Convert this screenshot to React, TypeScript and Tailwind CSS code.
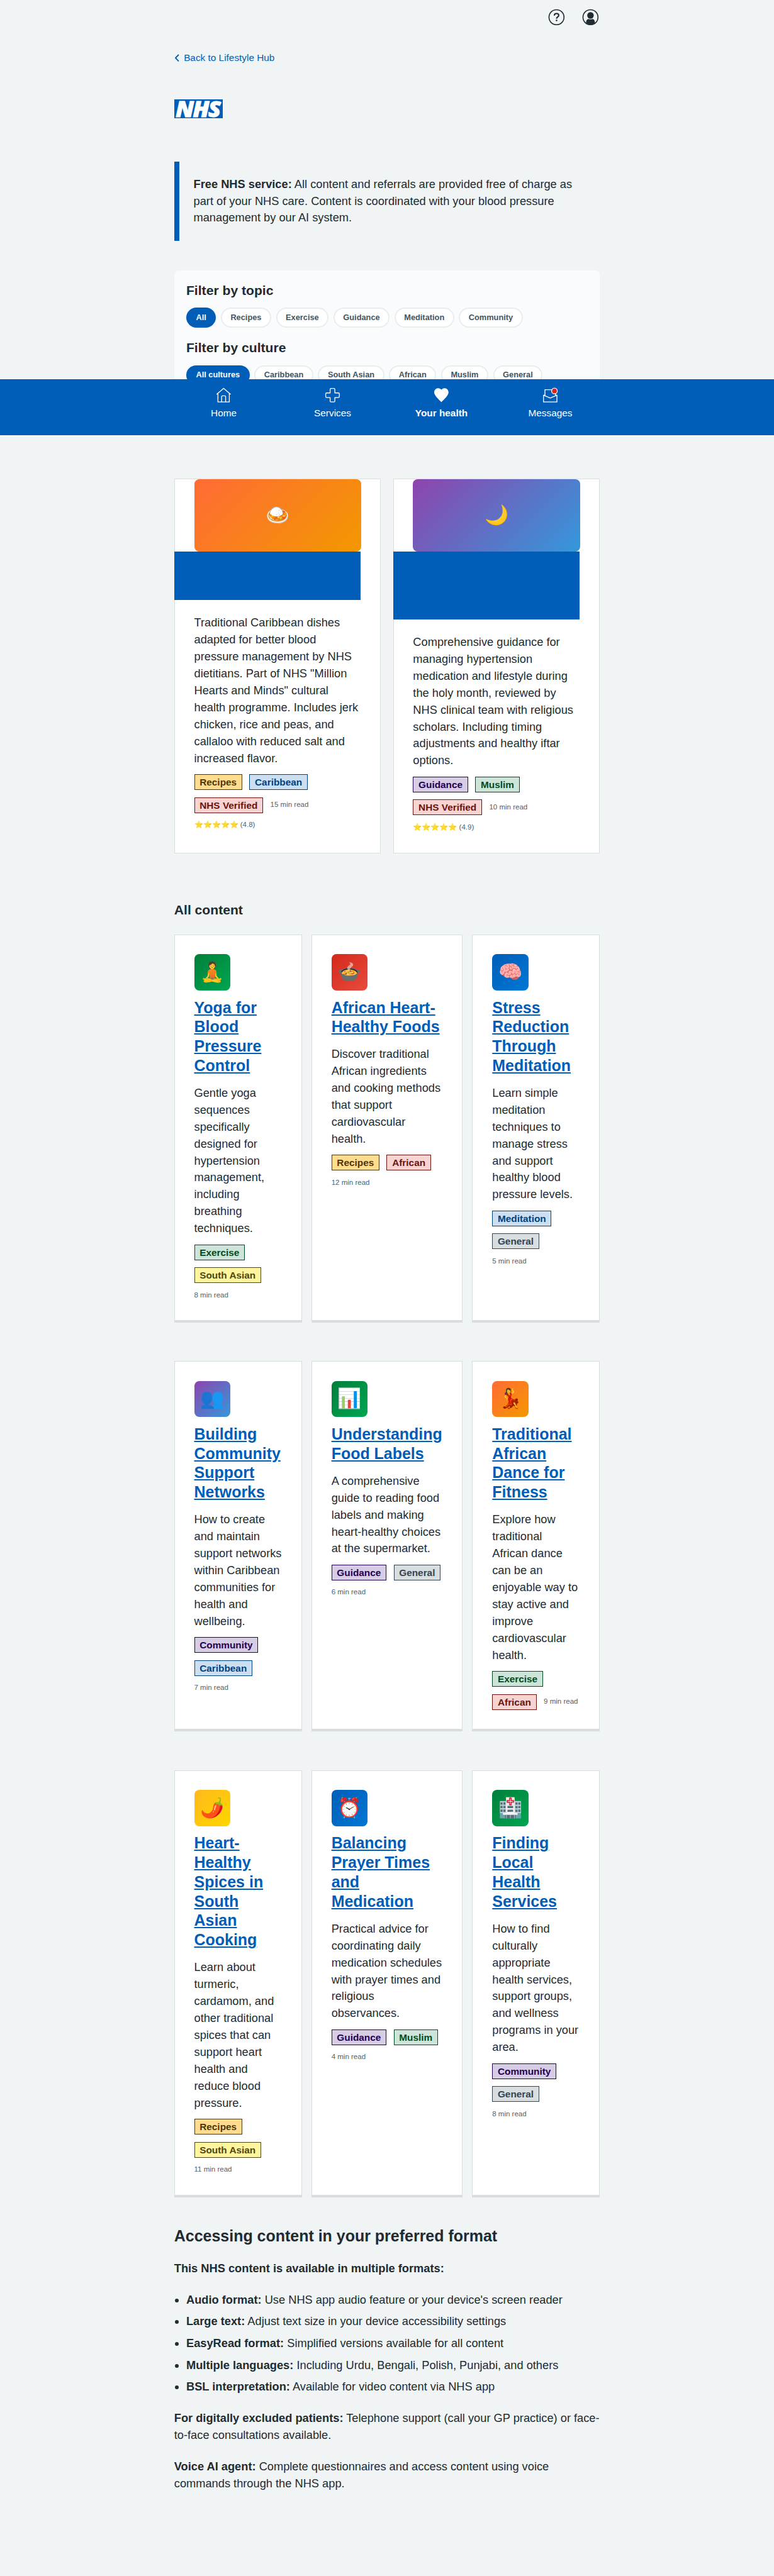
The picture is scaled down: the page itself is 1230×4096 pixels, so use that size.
import type { ReactNode } from "react";

const tones = {
  orange: "bg-[#ffdc8e] text-[#4d3705] border-[#4d3705]",
  blue: "bg-[#ccdff1] text-[#004281] border-[#004281]",
  red: "bg-[#f7d4d1] text-[#6a140e] border-[#6a140e]",
  purple: "bg-[#d6cce3] text-[#240052] border-[#240052]",
  green: "bg-[#cce5d8] text-[#004b23] border-[#004b23]",
  grey: "bg-[#d8dde0] text-[#354450] border-[#354450]",
  yellow: "bg-[#fff59d] text-[#4d4712] border-[#4d4712]",
};

type Tone = keyof typeof tones;
type TagData = [string, Tone];

const gradients = {
  green: "bg-[linear-gradient(135deg,#007f3b,#00a651)]",
  red: "bg-[linear-gradient(135deg,#d5281b,#e74c3c)]",
  blue: "bg-[linear-gradient(135deg,#005eb8,#0078d4)]",
  purple: "bg-[linear-gradient(135deg,#8e44ad,#3498db)]",
  orange: "bg-[linear-gradient(135deg,#ff6b35,#f39800)]",
  yellow: "bg-[linear-gradient(135deg,#ffb81c,#ffd700)]",
};

type Gradient = keyof typeof gradients;

interface Article {
  emoji: string;
  gradient: Gradient;
  title: string;
  text: string;
  tags: TagData[];
  read: string;
}

const rows: { height: string; articles: Article[] }[] = [
  {
    height: "h-[642px]",
    articles: [
      {
        emoji: "🧘",
        gradient: "green",
        title: "Yoga for Blood Pressure Control",
        text: "Gentle yoga sequences specifically designed for hypertension management, including breathing techniques.",
        tags: [["Exercise", "green"], ["South Asian", "yellow"]],
        read: "8 min read",
      },
      {
        emoji: "🍲",
        gradient: "red",
        title: "African Heart-Healthy Foods",
        text: "Discover traditional African ingredients and cooking methods that support cardiovascular health.",
        tags: [["Recipes", "orange"], ["African", "red"]],
        read: "12 min read",
      },
      {
        emoji: "🧠",
        gradient: "blue",
        title: "Stress Reduction Through Meditation",
        text: "Learn simple meditation techniques to manage stress and support healthy blood pressure levels.",
        tags: [["Meditation", "blue"], ["General", "grey"]],
        read: "5 min read",
      },
    ],
  },
  {
    height: "h-[613px]",
    articles: [
      {
        emoji: "👥",
        gradient: "purple",
        title: "Building Community Support Networks",
        text: "How to create and maintain support networks within Caribbean communities for health and wellbeing.",
        tags: [["Community", "purple"], ["Caribbean", "blue"]],
        read: "7 min read",
      },
      {
        emoji: "📊",
        gradient: "green",
        title: "Understanding Food Labels",
        text: "A comprehensive guide to reading food labels and making heart-healthy choices at the supermarket.",
        tags: [["Guidance", "purple"], ["General", "grey"]],
        read: "6 min read",
      },
      {
        emoji: "💃",
        gradient: "orange",
        title: "Traditional African Dance for Fitness",
        text: "Explore how traditional African dance can be an enjoyable way to stay active and improve cardiovascular health.",
        tags: [["Exercise", "green"], ["African", "red"]],
        read: "9 min read",
      },
    ],
  },
  {
    height: "h-[707px]",
    articles: [
      {
        emoji: "🌶️",
        gradient: "yellow",
        title: "Heart-Healthy Spices in South Asian Cooking",
        text: "Learn about turmeric, cardamom, and other traditional spices that can support heart health and reduce blood pressure.",
        tags: [["Recipes", "orange"], ["South Asian", "yellow"]],
        read: "11 min read",
      },
      {
        emoji: "⏰",
        gradient: "blue",
        title: "Balancing Prayer Times and Medication",
        text: "Practical advice for coordinating daily medication schedules with prayer times and religious observances.",
        tags: [["Guidance", "purple"], ["Muslim", "green"]],
        read: "4 min read",
      },
      {
        emoji: "🏥",
        gradient: "green",
        title: "Finding Local Health Services",
        text: "How to find culturally appropriate health services, support groups, and wellness programs in your area.",
        tags: [["Community", "purple"], ["General", "grey"]],
        read: "8 min read",
      },
    ],
  },
];

function Tag({ label, tone }: { label: string; tone: Tone }) {
  return (
    <span className={`border px-2 text-[16px] leading-[24px] font-bold whitespace-nowrap ${tones[tone]}`}>
      {label}
    </span>
  );
}

function Meta({ tags, read, rating }: { tags: TagData[]; read: string; rating?: string }) {
  return (
    <div className="mt-3 flex flex-wrap items-center gap-3 text-[12px] leading-[16px] text-[#4c6272]">
      {tags.map(([label, tone]) => (
        <Tag key={label} label={label} tone={tone} />
      ))}
      <span className="whitespace-nowrap">{read}</span>
      {rating && <span className="w-full whitespace-nowrap">⭐⭐⭐⭐⭐ ({rating})</span>}
    </div>
  );
}

function ArticleCard({ article }: { article: Article }) {
  return (
    <article className="border border-b-[4.200px] border-[#d8dde0] bg-white p-8">
      <div className={`flex size-[60px] items-center justify-center rounded-lg text-[32px] leading-none ${gradients[article.gradient]}`}>
        {article.emoji}
      </div>
      <h3 className="mt-3 text-[26px] leading-[32px] font-bold text-[#005eb8] underline">{article.title}</h3>
      <p className="mt-4 text-[19px] leading-[28px]">{article.text}</p>
      <Meta tags={article.tags} read={article.read} />
    </article>
  );
}

function Featured({ emoji, gradient, band, text, tags, read, rating }: {
  emoji: string;
  gradient: Gradient;
  band: string;
  text: string;
  tags: TagData[];
  read: string;
  rating: string;
}) {
  return (
    <article className="h-[620px] border border-[#d8dde0] bg-white px-8">
      <div className={`flex h-[120px] items-center justify-center rounded-lg text-[32px] leading-none ${gradients[gradient]}`}>
        {emoji}
      </div>
      <div className={`-ml-[33px] w-[308px] bg-[#005eb8] ${band}`} />
      <p className="mt-6 text-[19px] leading-[28px]">{text}</p>
      <Meta tags={tags} read={read} rating={rating} />
    </article>
  );
}

function Pills({ items }: { items: string[] }) {
  return (
    <div className="mt-[14px] mb-5 flex gap-2">
      {items.map((item, i) => (
        <button
          key={item}
          className={`rounded-[20px] border-[2.100px] px-[14px] py-[7px] text-[13.333px] leading-[15px] font-bold whitespace-nowrap ${
            i === 0 ? "border-[#005eb8] bg-[#005eb8] text-white" : "border-[#e8edee] bg-white text-[#425563]"
          }`}
        >
          {item}
        </button>
      ))}
    </div>
  );
}

function NavItem({ label, bold, children }: { label: string; bold?: boolean; children: ReactNode }) {
  return (
    <a className={`flex w-[180px] flex-col items-center pt-[10px] text-[16px] leading-[24px] ${bold ? "font-bold" : ""}`}>
      <svg viewBox="0 0 32 32" className="mb-px size-8" fill="none" stroke="white" strokeWidth="1.4" strokeLinecap="round" strokeLinejoin="round">
        {children}
      </svg>
      {label}
    </a>
  );
}

const formats: [string, string][] = [
  ["Audio format:", "Use NHS app audio feature or your device's screen reader"],
  ["Large text:", "Adjust text size in your device accessibility settings"],
  ["EasyRead format:", "Simplified versions available for all content"],
  ["Multiple languages:", "Including Urdu, Bengali, Polish, Punjabi, and others"],
  ["BSL interpretation:", "Available for video content via NHS app"],
];

export default function App() {
  return (
    <div className="relative h-[4263px] w-[1280px] overflow-hidden bg-[#f0f4f5] font-['Liberation_Sans',Arial,sans-serif] text-[#212b32] [zoom:0.9609375]">
      <div className="mx-auto w-[704px]">
        <header className="flex justify-end gap-6 pt-3">
          <svg viewBox="0 0 32 32" className="size-8" fill="none" stroke="#212b32">
            <circle cx="16" cy="16" r="12.4" strokeWidth="1.7" />
            <path d="M12.4 13.300c0-2.100 1.500-3.400 3.700-3.400s3.600 1.200 3.600 3.100c0 2.400-3.600 2.700-3.600 5.400" strokeWidth="2.200" />
            <circle cx="16.100" cy="21.300" r="1.350" fill="#212b32" stroke="none" />
          </svg>
          <svg viewBox="0 0 32 32" className="size-8" fill="#212b32">
            <circle cx="16" cy="16" r="12.4" fill="none" stroke="#212b32" strokeWidth="1.7" />
            <circle cx="16" cy="13" r="5.400" />
            <path d="M8.700 25.600c0-4.600 1.800-6.700 4.300-6.700 1 .5 2 .7 3 .7s2-.2 3-.7c2.500 0 4.300 2.100 4.300 6.700A12.400 12.400 0 0 1 16 28.400a12.400 12.400 0 0 1-7.300-2.800z" />
          </svg>
        </header>

        <a className="mt-[39.500px] flex items-center text-[16px] leading-[24px] text-[#005eb8]">
          <svg viewBox="0 0 16 24" className="h-6 w-4" fill="none" stroke="#005eb8" strokeWidth="2" strokeLinecap="round" strokeLinejoin="round">
            <path d="M6.700 7.800 2 12.700l4.700 4.900" />
          </svg>
          Back to Lifestyle Hub
        </a>

        <div className="mt-[56.500px] h-8 w-20 bg-[#005eb8]">
          <svg viewBox="0 0 80 32" className="h-8 w-20 overflow-visible">
            <text x="2.300" y="29.200" fill="white" stroke="white" strokeWidth="1.100" fontFamily="'Open Sans'" fontStyle="italic" fontWeight="800" fontSize="36" letterSpacing="-1.500" textLength="73" lengthAdjust="spacingAndGlyphs">
              NHS
            </text>
          </svg>
        </div>

        <div className="mt-[71px] border-l-[8.400px] border-[#005eb8] py-6 pl-[23.700px] pr-6 text-[19px] leading-[28px]">
          <b>Free NHS service:</b> All content and referrals are provided free of charge as part of your NHS care. Content is
          coordinated with your blood pressure management by our AI system.
        </div>

        <section className="mt-12 h-[225px] rounded-lg bg-[#fafbfd] p-5">
          <h2 className="text-[22px] leading-[28px] font-bold">Filter by topic</h2>
          <Pills items={["All", "Recipes", "Exercise", "Guidance", "Meditation", "Community"]} />
          <h2 className="text-[22px] leading-[28px] font-bold">Filter by culture</h2>
          <Pills items={["All cultures", "Caribbean", "South Asian", "African", "Muslim", "General"]} />
        </section>

        <section className="mt-[120px] grid grid-cols-2 gap-5">
          <Featured
            emoji="🍛"
            gradient="orange"
            band="h-20"
            text={'Traditional Caribbean dishes adapted for better blood pressure management by NHS dietitians. Part of NHS "Million Hearts and Minds" cultural health programme. Includes jerk chicken, rice and peas, and callaloo with reduced salt and increased flavor.'}
            tags={[["Recipes", "orange"], ["Caribbean", "blue"], ["NHS Verified", "red"]]}
            read="15 min read"
            rating="4.8"
          />
          <Featured
            emoji="🌙"
            gradient="purple"
            band="h-28"
            text="Comprehensive guidance for managing hypertension medication and lifestyle during the holy month, reviewed by NHS clinical team with religious scholars. Including timing adjustments and healthy iftar options."
            tags={[["Guidance", "purple"], ["Muslim", "green"], ["NHS Verified", "red"]]}
            read="10 min read"
            rating="4.9"
          />
        </section>

        <h2 className="mt-20 text-[22px] leading-[28px] font-bold">All content</h2>
        <div className="mt-[26px] flex flex-col gap-16">
          {rows.map((row) => (
            <div key={row.height} className={`grid grid-cols-[211px_250px_211px] gap-4 ${row.height}`}>
              {row.articles.map((article) => (
                <ArticleCard key={article.title} article={article} />
              ))}
            </div>
          ))}
        </div>

        <section className="mt-12 text-[19px] leading-[28px]">
          <h2 className="text-[26px] leading-[32px] font-bold">Accessing content in your preferred format</h2>
          <p className="mt-6 font-bold">This NHS content is available in multiple formats:</p>
          <ul className="mt-6 list-disc pl-5">
            {formats.map(([name, detail]) => (
              <li key={name} className="mb-2">
                <b>{name}</b> {detail}
              </li>
            ))}
          </ul>
          <p className="mt-6">
            <b>For digitally excluded patients:</b> Telephone support (call your GP practice) or face-to-face consultations
            available.
          </p>
          <p className="mt-6">
            <b>Voice AI agent:</b> Complete questionnaires and access content using voice commands through the NHS app.
          </p>
        </section>
      </div>

      {/* Bottom navigation bar, overlaying the scrolled content */}
      <nav className="absolute inset-x-0 top-[628px] flex h-[92px] justify-center bg-[#005eb8] text-white">
        <NavItem label="Home">
          <path d="M4.800 14.400 16 4.600l11.200 9.800M6.600 13v14.200h18.800V13M12.700 27v-8.600c0-.9.500-1.400 1.400-1.400h3.800c.9 0 1.400.5 1.400 1.400V27" />
        </NavItem>
        <NavItem label="Services">
          <path d="M13.800 4.800h4.400c1 0 1.700.7 1.700 1.700v5.700h5.700c1 0 1.700.7 1.700 1.700v4.300c0 1-.7 1.700-1.700 1.700h-5.700v5.600c0 1-.7 1.700-1.700 1.700h-4.400c-1 0-1.700-.7-1.700-1.700v-5.600H6.500c-1 0-1.700-.7-1.700-1.700v-4.300c0-1 .7-1.700 1.700-1.700h5.600V6.500c0-1 .7-1.700 1.700-1.700z" />
        </NavItem>
        <NavItem label="Your health" bold>
          <path d="M16 26.500C13.500 23.300 4.800 17.500 4.800 11.300c0-3.400 2.500-6.100 5.700-6.100 2.400 0 4.500 1.200 5.500 3.400 1-2.200 3.100-3.400 5.500-3.400 3.200 0 5.700 2.700 5.700 6.100 0 6.200-8.700 12-11.200 15.200z" fill="white" />
        </NavItem>
        <NavItem label="Messages">
          <path d="M7.300 15.600V6.900h13M24.800 12.500v3.100M7.300 16H4.900v11.200h22.200V16h-2.300M4.900 16 16 20.700 27.100 16" />
          <circle cx="23" cy="9" r="4.700" fill="#d5281b" />
        </NavItem>
      </nav>
    </div>
  );
}
